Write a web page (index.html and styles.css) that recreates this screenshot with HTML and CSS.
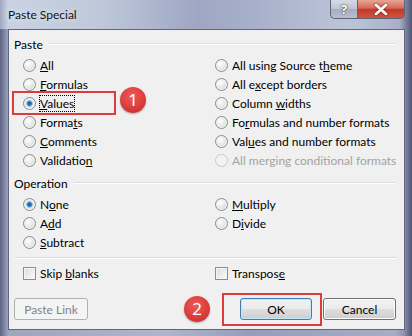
FILE: index.html
```html
<!DOCTYPE html>
<html lang="en">
<head>
    <meta charset="UTF-8">
    <title>Paste Special</title>
    <link rel="stylesheet" href="styles.css">
</head>
<body>
    <div class="window">
        <div class="titlebar">
            <span class="title">Paste Special</span>
            <div class="caption-btns">
                <span class="cap help">?</span>
                <span class="cap close">
                    <svg width="14" height="11" viewBox="0 0 14 11"><path d="M2 1 L12 10 M12 1 L2 10" stroke="#fff" stroke-width="2.6" stroke-linecap="round"/></svg>
                </span>
            </div>
        </div>

        <div class="client">
            <div class="group-head"><span>Paste</span><i class="rule"></i></div>
            <div class="options six">
                <div class="opt"><span class="radio"></span><span><u>A</u>ll</span></div>
                <div class="opt"><span class="radio"></span><span>All using Source t<u>h</u>eme</span></div>
                <div class="opt"><span class="radio"></span><span><u>F</u>ormulas</span></div>
                <div class="opt"><span class="radio"></span><span>All e<u>x</u>cept borders</span></div>
                <div class="opt"><span class="radio checked"></span><span class="focus"><u>V</u>alues</span></div>
                <div class="opt"><span class="radio"></span><span>Column <u>w</u>idths</span></div>
                <div class="opt"><span class="radio"></span><span>Forma<u>t</u>s</span></div>
                <div class="opt"><span class="radio"></span><span>Fo<u>r</u>mulas and number formats</span></div>
                <div class="opt"><span class="radio"></span><span><u>C</u>omments</span></div>
                <div class="opt"><span class="radio"></span><span>Val<u>u</u>es and number formats</span></div>
                <div class="opt"><span class="radio"></span><span>Validatio<u>n</u></span></div>
                <div class="opt disabled"><span class="radio"></span><span>All merging conditional formats</span></div>
            </div>

            <div class="group-head second"><span>Operation</span><i class="rule"></i></div>
            <div class="options three">
                <div class="opt"><span class="radio checked"></span><span>N<u>o</u>ne</span></div>
                <div class="opt"><span class="radio"></span><span><u>M</u>ultiply</span></div>
                <div class="opt"><span class="radio"></span><span>A<u>d</u>d</span></div>
                <div class="opt"><span class="radio"></span><span>D<u>i</u>vide</span></div>
                <div class="opt"><span class="radio"></span><span><u>S</u>ubtract</span></div>
            </div>

            <i class="separator"></i>

            <div class="options checks">
                <div class="opt"><span class="check"></span><span>Skip <u>b</u>lanks</span></div>
                <div class="opt"><span class="check"></span><span>Transpos<u>e</u></span></div>
            </div>

            <div class="buttons">
                <button class="btn disabled">Paste Link</button>
                <span class="spacer"></span>
                <button class="btn default">OK</button>
                <button class="btn">Cancel</button>
            </div>
        </div>

        <!-- tutorial markers -->
        <div class="mark-box box-values"></div>
        <div class="mark-num num-1">1</div>
        <div class="mark-box box-ok"></div>
        <div class="mark-num num-2">2</div>
    </div>
</body>
</html>
```

FILE: styles.css
```css
/* Base */
body {
    margin: 0;
    font-family: 'Lato', 'Noto Sans', sans-serif;
    font-size: 12px;
    color: #000;
    background: #fff;
}

.window {
    position: relative;
    width: 412px;
    height: 336px;
    box-sizing: border-box;
    padding: 0 7px 6px 8px;
    display: flex;
    flex-direction: column;
    background: linear-gradient(90deg, #5f6382 0%, #7d82a2 1%, #9ea5c0 2%, #aeb6cc 40%, #969dbb 60%, #a6adc6 96%, #8f94b2 98%, #4e5370 100%);
    overflow: hidden;
}

/* Title bar */
.titlebar {
    height: 29px;
    display: flex;
    justify-content: space-between;
    align-items: flex-start;
    margin: 0 -7px 0 -8px;
    padding: 0 7px 0 8px;
    background: linear-gradient(90deg, #9fa6c0 0%, #c9d2e2 2%, #bec8da 25%, #9ea6c3 48%, #aab3cb 65%, #bcc5d8 85%, #a9afc8 97%, #4e5370 100%);
}

.title {
    line-height: 30px;
    color: #111;
    text-shadow: 0 0 6px #eef2f8;
}

.caption-btns {
    display: flex;
    flex: none;
}

.cap {
    height: 19px;
    display: flex;
    align-items: center;
    justify-content: center;
    box-sizing: border-box;
    border: 1px solid #5d6378;
    border-top: none;
    flex: none;
}

.help {
    width: 27px;
    border-radius: 0 0 0 5px;
    border-right: none;
    background: linear-gradient(#d6dbe6 0%, #bcc3d3 50%, #a5aec2 52%, #b7bfd0 100%);
    color: #fff;
    font-family: 'Noto Sans', sans-serif;
    font-weight: bold;
    font-size: 13px;
    text-shadow: 0 0 2px #444, 0 0 1px #333;
}

.close {
    width: 48px;
    border-radius: 0 0 5px 0;
    background: linear-gradient(#e8a596 0%, #d66a55 45%, #c1392a 52%, #d1553e 100%);
}

.close svg {
    filter: drop-shadow(0 0 1px #6a1a10);
}

/* Client area */
.client {
    flex: 1;
    min-width: 0;
    background: #f0f0f0;
    border: 1px solid #5e6682;
    padding: 0 8px 0 5px;
    display: flex;
    flex-direction: column;
}

.group-head {
    display: flex;
    align-items: center;
    height: 16px;
    margin-top: 6px;
}

.group-head.second {
    margin-top: 5px;
}

.group-head .rule {
    flex: 1;
    height: 1px;
    background: #d5dfe5;
    margin-left: 6px;
    border-bottom: 1px solid #fff;
}

.options {
    display: grid;
    grid-template-columns: 192px minmax(0, 1fr);
    grid-auto-rows: 19px;
    margin-top: 4px;
    padding-left: 9px;
}

.opt {
    display: flex;
    align-items: center;
    gap: 4px;
    white-space: nowrap;
}

.opt.disabled {
    color: #a3a3a3;
}

.focus {
    outline: 1px dotted #000;
    line-height: 15px;
}

/* Radio buttons, Win7 look */
.radio {
    width: 13px;
    height: 13px;
    box-sizing: border-box;
    border-radius: 50%;
    border: 1px solid #8a8c8e;
    background: radial-gradient(circle at 40% 35%, #ffffff 0%, #e9e9e9 45%, #cfcfcf 100%);
    box-shadow: inset 0 0 0 1px #f4f4f4;
    flex: none;
}

.radio.checked {
    background: radial-gradient(circle at 50% 50%, #1e5d90 0%, #2a7ac0 25%, #8cc4ec 38%, #e2e2e2 45%, #f8f8f8 100%);
}

.disabled .radio {
    border-color: #c8c9ca;
    background: #f2f2f2;
    box-shadow: none;
}

.check {
    width: 13px;
    height: 13px;
    box-sizing: border-box;
    border: 1px solid #8e8f8f;
    background: linear-gradient(135deg, #dcdcdc, #fbfbfb);
    box-shadow: inset 0 0 0 1px #f4f4f4;
    flex: none;
}

.separator {
    display: block;
    height: 1px;
    background: #d5dfe5;
    border-bottom: 1px solid #fff;
    margin-top: 5px;
}

.checks {
    margin-top: 5px;
}

/* Buttons */
.buttons {
    display: flex;
    gap: 11px;
    margin-top: 15px;
}

.spacer {
    flex: 1;
}

.btn {
    height: 22px;
    width: 73px;
    font-family: inherit;
    font-size: 12px;
    color: #000;
    border: 1px solid #707070;
    border-radius: 3px;
    background: linear-gradient(#f2f2f2 0%, #ebebeb 50%, #dddddd 51%, #cfcfcf 100%);
    box-shadow: inset 0 0 0 1px #fcfcfc;
    padding: 0;
}

.btn.default {
    width: 72px;
    border-color: #3c7fb1;
    box-shadow: inset 0 0 0 1px #bfe6f9;
}

.btn.disabled {
    width: 74px;
    color: #838383;
    border-color: #adb2b5;
    background: #f4f4f4;
    box-shadow: none;
}

/* Red tutorial markers */
.mark-box {
    position: absolute;
    border: 2px solid #dd3c3c;
    box-sizing: border-box;
}

.box-values {
    left: 12px;
    top: 91px;
    width: 104px;
    height: 24px;
}

.box-ok {
    left: 222px;
    top: 293px;
    width: 100px;
    height: 33px;
}

.mark-num {
    position: absolute;
    width: 26px;
    height: 26px;
    border-radius: 50%;
    background: radial-gradient(circle at 45% 35%, #ee5b57 0%, #d93a3a 60%, #b82a2c 100%);
    color: #fff;
    font-family: 'Noto Sans', sans-serif;
    font-size: 17px;
    line-height: 26px;
    text-align: center;
    box-shadow: 0 1px 2px rgba(0, 0, 0, 0.3);
}

.num-1 {
    left: 120px;
    top: 87px;
}

.num-2 {
    left: 184px;
    top: 296px;
}
```
